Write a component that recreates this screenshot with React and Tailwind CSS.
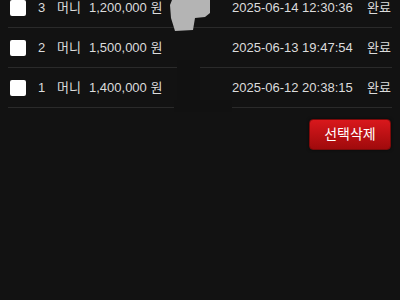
import React from "react";

const rows = [
  { no: 3, amount: "1,200,000", date: "2025-06-14 12:30:36" },
  { no: 2, amount: "1,500,000", date: "2025-06-13 19:47:54" },
  { no: 1, amount: "1,400,000", date: "2025-06-12 20:38:15" },
];

export default function App() {
  return (
    <div
      className="relative w-[400px] h-[300px] overflow-hidden bg-[#121212] text-[#dcdcdc]"
      style={{ fontFamily: '"Liberation Sans", "Noto Sans CJK KR", sans-serif' }}
    >
      {/* list */}
      <div className="mx-[8px] -mt-[12px]">
        {rows.map((r) => (
          <div
            key={r.no}
            className="h-[40px] flex items-center border-b border-[#2a2a2a] text-[13px]"
          >
            <span className="ml-[2px] w-[16px] h-[16px] rounded-[2px] bg-white shrink-0" />
            <span className="ml-[12px] w-[12px]">{r.no}</span>
            <span className="ml-[7px] w-[32px]">머니</span>
            <span className="w-[140px]">{r.amount} 원</span>
            <span className="ml-[3px] w-[135px]">{r.date}</span>
            <span>완료</span>
          </div>
        ))}
      </div>

      {/* button */}
      <div className="flex justify-end mt-[11px] pr-[9px]">
        <button className="w-[82px] h-[31px] rounded-[4px] border border-[#7a0a0a] bg-gradient-to-b from-[#d9181c] to-[#a00a0c] text-white text-[14px] shadow-[0_0_3px_rgba(0,0,0,0.6)]">
          선택삭제
        </button>
      </div>

      {/* dark patches over broken lines */}
      <div className="absolute left-[177px] top-[60px] w-[23px] h-[50px] bg-[#111111]" />
      <div className="absolute left-[174px] top-[100px] w-[58px] h-[12px] bg-[#111111]" />

      {/* grey smudge */}
      <svg className="absolute left-[168px] top-0" width="46" height="32" viewBox="0 0 46 32">
        <polygon
          points="4,0 42,0 42,13 37,17 27,18 25,30 7,31 3,18 2,5"
          fill="#b4b4b4"
        />
      </svg>
    </div>
  );
}
